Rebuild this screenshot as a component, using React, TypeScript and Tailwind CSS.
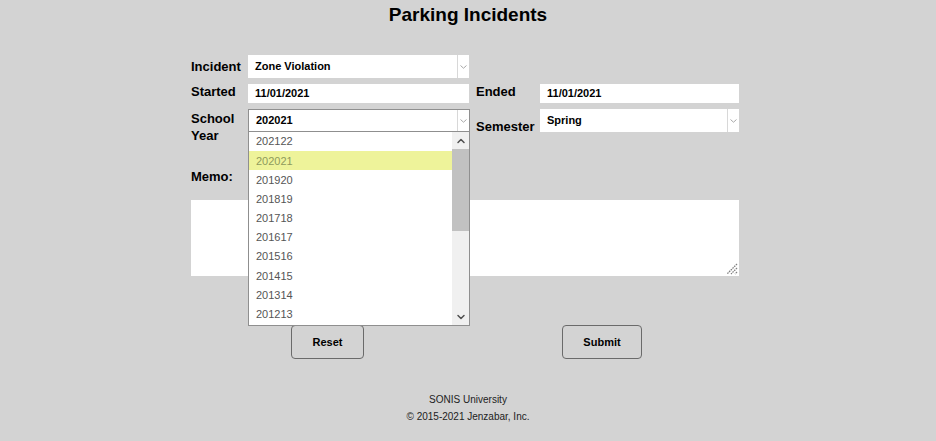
import { ChevronDown, ChevronUp } from 'lucide-react'

const years = ['202122', '202021', '201920', '201819', '201718', '201617', '201516', '201415', '201314', '201213']

function Chevron({ className = '' }: { className?: string }) {
  return (
    <div className={`flex w-[12px] items-center justify-center border-l border-[#d8d8d8] ${className}`}>
      <svg width="7" height="4" viewBox="0 0 7 4" fill="none">
        <path d="M0.5 0.5L3.5 3.2L6.5 0.5" stroke="#a8a8a8" strokeWidth="1" />
      </svg>
    </div>
  )
}

function SelectBox({ value, width, focused = false }: { value: string, width: string, focused?: boolean }) {
  return (
    <div className={`flex h-[23px] ${width} bg-white ${focused ? 'border border-[#8f8f8f]' : ''}`}>
      <div className="flex flex-1 items-center pl-[7px] text-[11px] font-bold text-black">{value}</div>
      <Chevron />
    </div>
  )
}

function TextInput({ value, width }: { value: string, width: string }) {
  return (
    <div className={`flex h-[19px] ${width} items-center bg-white pl-[7px] text-[11px] font-bold text-black`}>{value}</div>
  )
}

function YearList() {
  return (
    <div className="absolute left-[57px] top-[23px] z-10 flex h-[194px] w-[222px] border border-t-0 border-[#8f8f8f] bg-white">
      <div className="flex-1">
        {years.map((y, i) => (
          <div
            key={y}
            className={`flex h-[19.2px] items-center pl-[7px] text-[11px] ${i === 1 ? 'bg-[#eef39a] text-[#8e9a5c]' : 'text-[#555]'}`}
          >
            {y}
          </div>
        ))}
      </div>
      <div className="flex w-[17px] flex-col bg-[#f0f0f0]">
        <div className="flex h-[17px] items-center justify-center">
          <ChevronUp size={12} strokeWidth={3} className="text-[#505050]" />
        </div>
        <div className="h-[82px] bg-[#c1c1c1]" />
        <div className="flex-1" />
        <div className="flex h-[17px] items-center justify-center">
          <ChevronDown size={12} strokeWidth={3} className="text-[#505050]" />
        </div>
      </div>
    </div>
  )
}

export default function App() {
  return (
    <div className="min-h-[441px] w-full bg-[#d3d3d3] font-['Liberation_Sans',sans-serif] text-black">
      <h1 className="pt-[4px] text-center text-[19px] font-bold leading-[22px]">Parking Incidents</h1>

      <div className="ml-[191px] mt-[29px] w-[548px]">
        <div className="flex items-center">
          <div className="w-[57px] text-[13px] font-bold">Incident</div>
          <SelectBox value="Zone Violation" width="w-[221px]" />
        </div>

        <div className="mt-[6px] flex">
          <div className="w-[57px] text-[13px] font-bold leading-[15px]">Started</div>
          <TextInput value="11/01/2021" width="w-[221px]" />
          <div className="ml-[7px] w-[64px] text-[13px] font-bold leading-[15px]">Ended</div>
          <TextInput value="11/01/2021" width="w-[199px]" />
        </div>

        <div className="relative mt-[6px] flex">
          <div className="w-[57px] pt-[1px] text-[13px] font-bold leading-[17px]">School<br />Year</div>
          <SelectBox value="202021" width="w-[222px]" focused />
          <div className="ml-[6px] w-[64px] pt-[10px] text-[13px] font-bold leading-[15px]">Semester</div>
          <SelectBox value="Spring" width="w-[199px]" />
          <YearList />
        </div>

        <div className="mt-[25px] text-[13px] font-bold leading-[15px]">Memo:</div>

        <div className="relative mt-[16px] h-[76px] w-[548px] bg-white">
          <svg className="absolute bottom-[1px] right-[1px]" width="13" height="13" viewBox="0 0 13 13">
            <path d="M12 2L2 12M12 6L6 12M12 10L10 12" stroke="#808080" strokeWidth="1.3" strokeDasharray="1.6 0.8" />
          </svg>
        </div>

        <div className="mt-[49px] flex">
          <button className="ml-[100px] h-[34px] w-[73px] rounded-[4px] border border-[#6a6a6a] bg-[#d3d3d3] text-[11px] font-bold">Reset</button>
          <button className="ml-[198px] h-[34px] w-[80px] rounded-[4px] border border-[#6a6a6a] bg-[#d3d3d3] text-[11px] font-bold">Submit</button>
        </div>
      </div>

      <div className="mt-[32px] text-center text-[10px] leading-[17px] text-[#222]">
        <div>SONIS University</div>
        <div>© 2015-2021 Jenzabar, Inc.</div>
      </div>
    </div>
  )
}
